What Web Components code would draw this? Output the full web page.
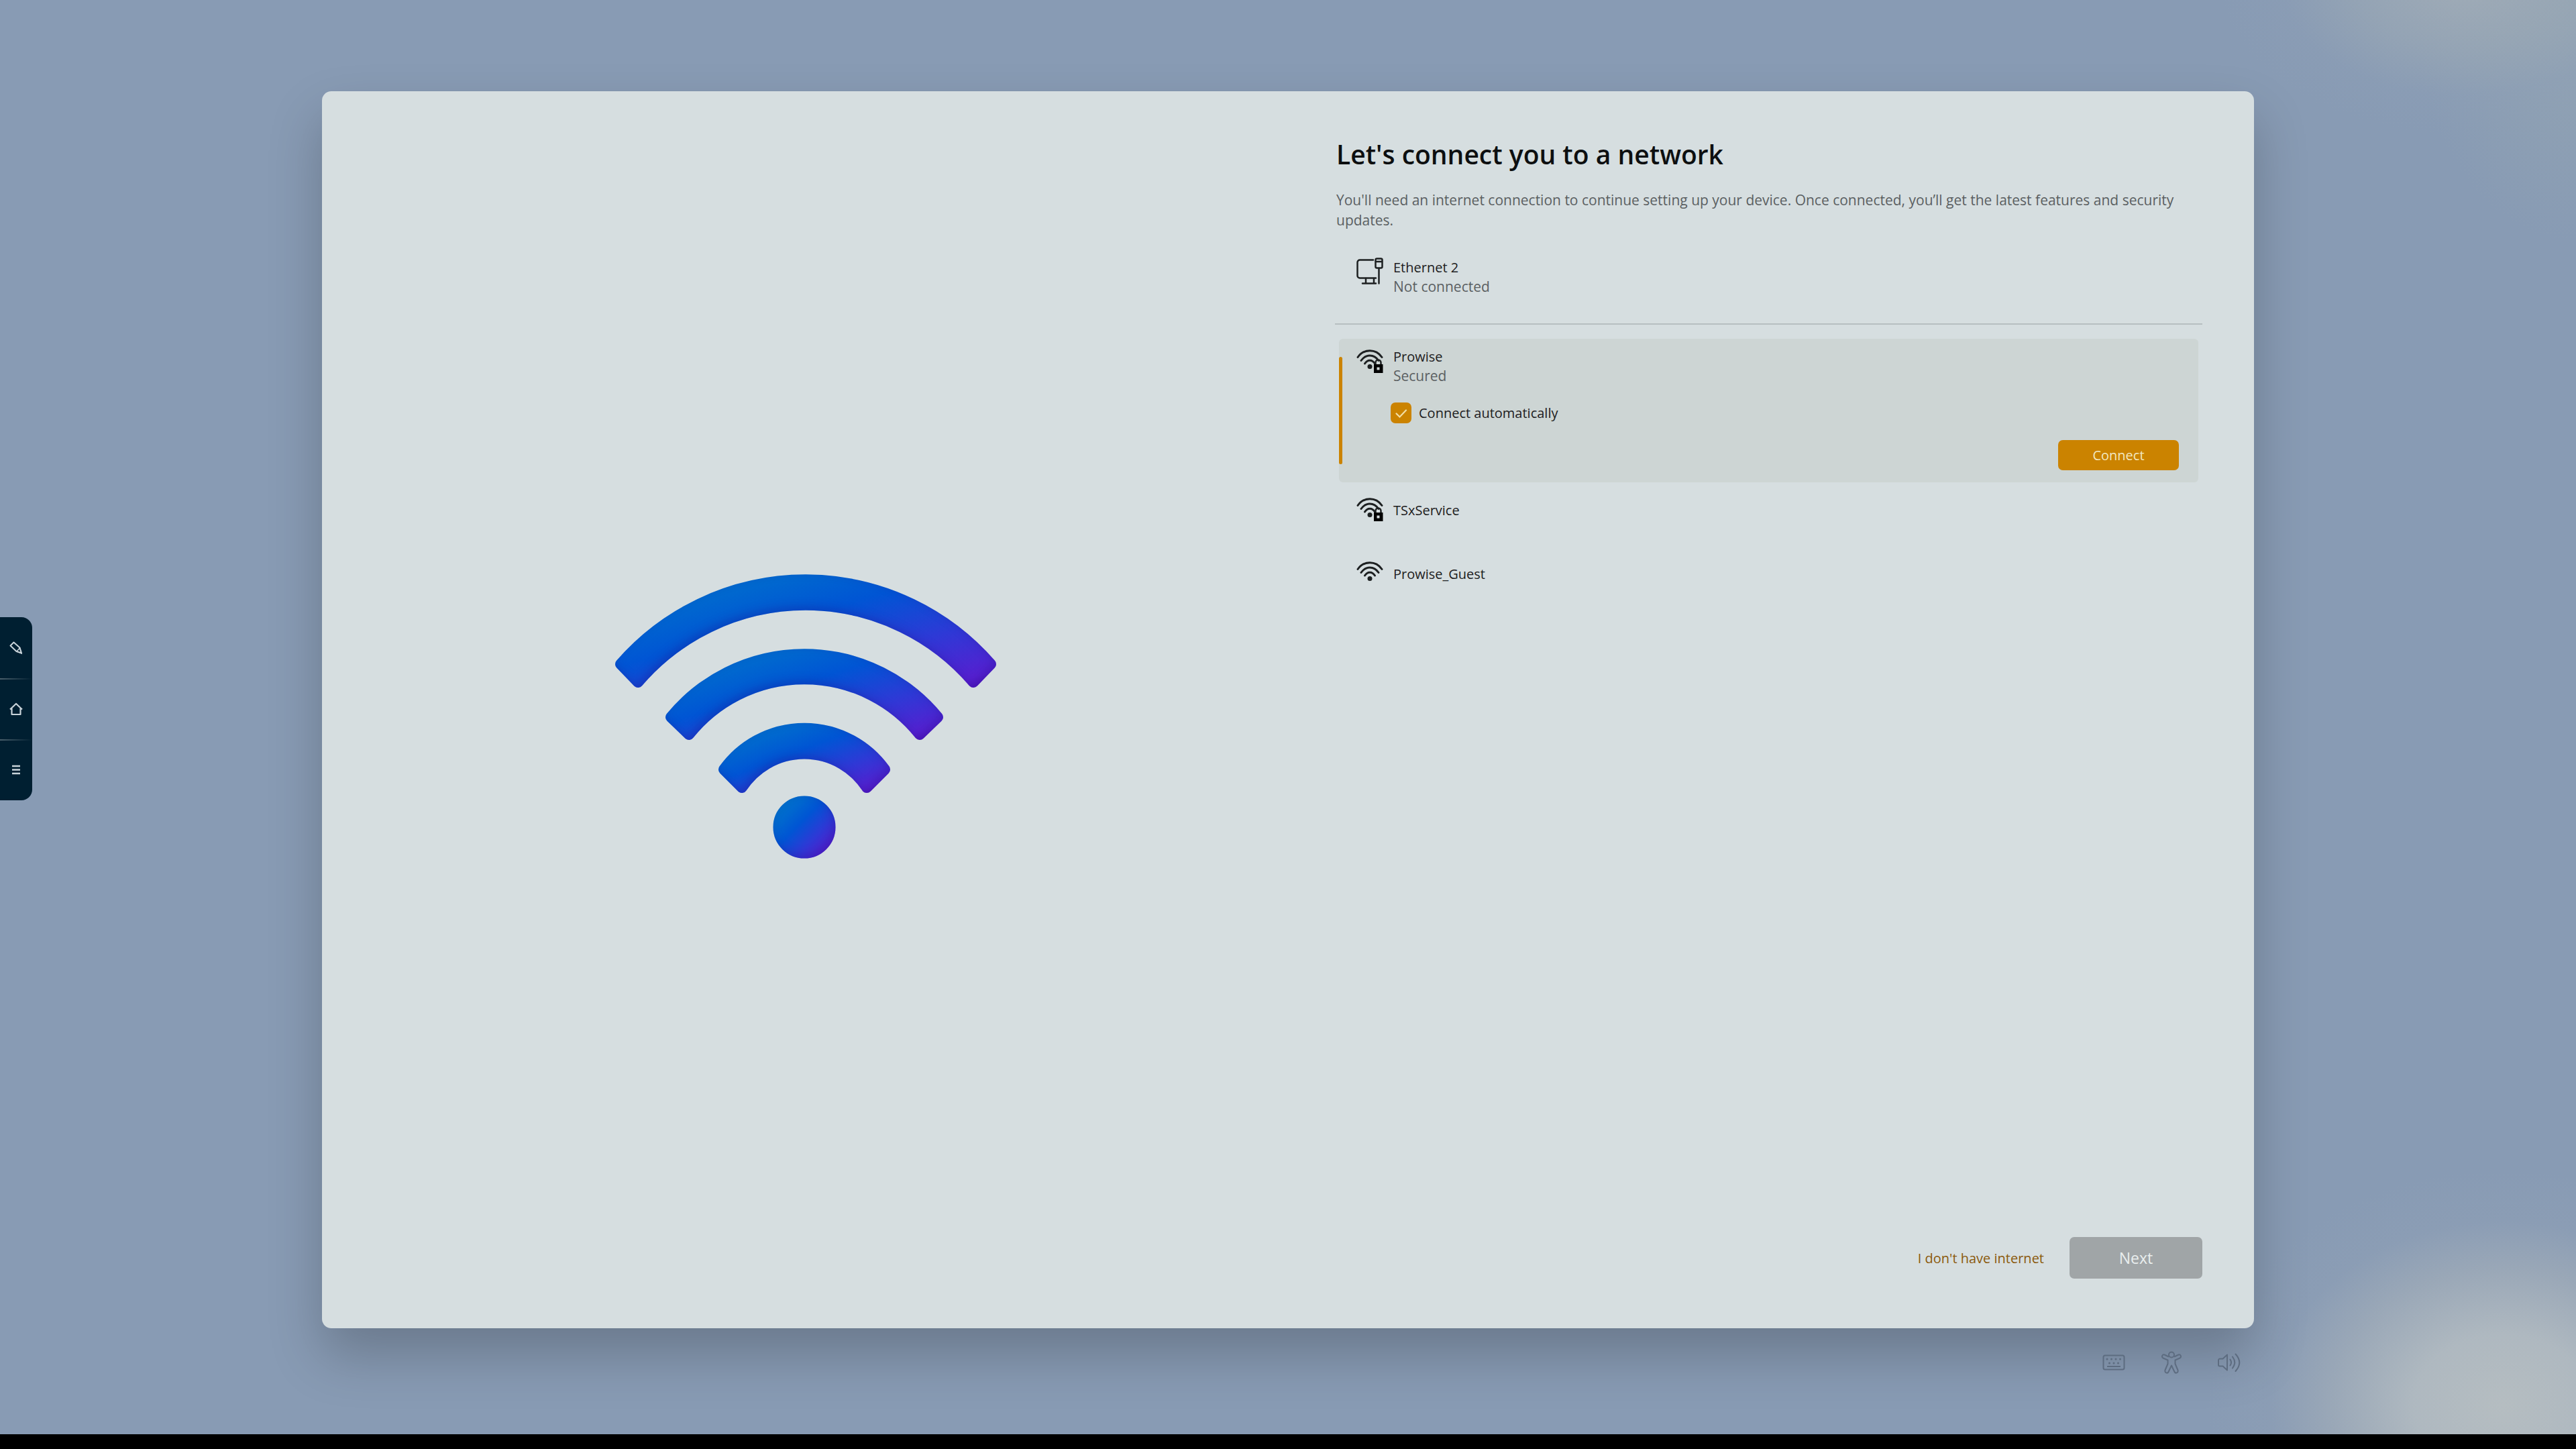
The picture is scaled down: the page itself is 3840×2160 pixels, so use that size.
<!DOCTYPE html>
<html lang="en">
<head>
<meta charset="utf-8">
<title>Network setup</title>
<style>
  :root {
    --colors-card: #d6dee0;
    --colors-selected: #cdd5d4;
    --colors-accent: #cb8300;
    --colors-text: #1d2021;
    --colors-muted: #5b6062;
    --colors-line: #b6bec1;
    --size-label: 20px;
    --size-body: 21px;
    --size-action: 23px;
    --size-title: 39px;
  }

  body {
    margin: 0;
    background: #000;
    color: var(--colors-text);
    font-family: "Open Sans", "Noto Sans", sans-serif;
    font-size: var(--size-label);
  }
</style>
</head>
<body>
<setup-screen>
  <side-dock slot="dock"></side-dock>
  <setup-card>
    <wifi-picture slot="picture"></wifi-picture>
    <span slot="title">Let's connect you to a network</span>
    <span slot="intro">You'll need an internet connection to continue setting up your device. Once connected, you’ll get the latest features and security updates.</span>

    <network-item icon="ethernet" name="Ethernet 2" status="Not connected"></network-item>
    <list-divider></list-divider>
    <network-item icon="wifi-secure" name="Prowise" status="Secured" selected>
      <connect-form></connect-form>
    </network-item>
    <network-item icon="wifi-secure" name="TSxService"></network-item>
    <network-item icon="wifi" name="Prowise_Guest"></network-item>

    <setup-actions slot="actions"></setup-actions>
  </setup-card>
  <system-tray slot="tray"></system-tray>
</setup-screen>

<script>
const wifiArcs = `
  <g fill="none" stroke="currentColor" stroke-width="3" stroke-linecap="round">
    <path d="M2 15.5C11 2.5 29 2.5 38 15.5"/>
    <path d="M7 20.5C14 10.5 26 10.5 33 20.5"/>
    <path d="M12.500 25C16.500 18.500 23.500 18.500 27.500 25"/>
  </g>
  <circle cx="20" cy="29.500" r="3.500" fill="currentColor"/>
`;

const icons = {
  'ethernet': {
    box: '0 0 40 40',
    body: `
      <g fill="none" stroke="currentColor" stroke-width="2.500" stroke-linejoin="round" stroke-linecap="round">
        <path d="M25 3.500H5A3.500 3.500 0 0 0 1.500 7V27A3.500 3.500 0 0 0 5 30.500H29"/>
        <path d="M14 31V38M26 31V38M9 38.500H29"/>
        <rect x="28.500" y="1.500" width="10" height="14" rx="2"/>
        <path d="M29 6H38M33.500 16V38.500"/>
      </g>`,
  },
  'wifi': { box: '0 0 40 40', body: wifiArcs },
  'wifi-secure': {
    box: '0 0 40 40',
    body: `
      ${wifiArcs}
      <path d="M28.500 27V23.500a4 4 0 0 1 8 0V27" fill="none" stroke="currentColor" stroke-width="2.500"/>
      <path fill="#000" fill-rule="evenodd" d="M26 26H39.500V39H26ZM30.500 30.500V34.500H34.500V30.500Z"/>`,
  },
  'keyboard': {
    box: '0 0 34 34',
    body: `
      <rect x="1.500" y="6.500" width="31" height="21" rx="2.500" fill="none" stroke="currentColor" stroke-width="2"/>
      <g fill="currentColor">
        <circle cx="7" cy="12" r="1.500"/><circle cx="13.500" cy="12" r="1.500"/>
        <circle cx="20" cy="12" r="1.500"/><circle cx="26.500" cy="12" r="1.500"/>
        <circle cx="10.500" cy="18" r="1.500"/><circle cx="17" cy="18" r="1.500"/><circle cx="23.500" cy="18" r="1.500"/>
      </g>
      <path d="M7 23H27" stroke="currentColor" stroke-width="2"/>`,
  },
  'accessibility': {
    box: '0 0 34 34',
    body: `
      <g fill="none" stroke="currentColor" stroke-width="2" stroke-linejoin="round">
        <circle cx="17" cy="5.500" r="4"/>
        <path d="M13 8.500L6.500 5.500C3.500 4.500 1.500 8.500 4.500 10.500L11.500 13.500V19L7.500 28.500C6.500 32.500 11 34 12.500 31L17 21.500L21.500 31C23 34 27.500 32.500 26.500 28.500L22.500 19V13.500L29.500 10.500C32.500 8.500 30.500 4.500 27.500 5.500L21 8.500"/>
      </g>`,
  },
  'volume': {
    box: '0 0 34 34',
    body: `
      <g fill="none" stroke="currentColor" stroke-width="2" stroke-linejoin="round" stroke-linecap="round">
        <path d="M14 5.500V28.500L7.500 22.500H3A2 2 0 0 1 1 20.500V13.500A2 2 0 0 1 3 11.500H7.500Z"/>
        <path d="M18.500 12.500Q21.500 17 18.500 21.500M22 8.500Q28.500 17 22 25.500M26.500 4.500Q38 17 26.500 30"/>
      </g>`,
  },
  'pen': {
    box: '0 0 20 20',
    body: `
      <path d="M1.500 6.500L6.500 1.500L15.500 9.500L18 17.500L10.500 15Z" fill="none" stroke="currentColor" stroke-width="2" stroke-linejoin="round"/>
      <path d="M11 15L15.500 10L18 18Z" fill="none" stroke="currentColor" stroke-width="1.500"/>`,
  },
  'home': {
    box: '0 0 20 20',
    body: '<path d="M1 10.500L10 2L19 10.500M3.500 9V18H16.500V9" fill="none" stroke="currentColor" stroke-width="2.200" stroke-linejoin="round"/>',
  },
  'menu': {
    box: '0 0 20 20',
    body: '<path d="M4 4H16M4 9.500H16M4 15H16" fill="none" stroke="currentColor" stroke-width="2.500"/>',
  },
};

class GlyphIcon extends HTMLElement {
  constructor() {
    super();
    this.attachShadow({ mode: 'open' });
  }

  connectedCallback() {
    const icon = icons[this.getAttribute('name')];

    this.shadowRoot.innerHTML = `
      <style>
        :host {
          display: block;
          flex: none;
          width: 40px;
          height: 40px;
        }

        svg {
          display: block;
          width: 100%;
          height: 100%;
        }
      </style>
      <svg viewBox="${icon.box}" aria-hidden="true">${icon.body}</svg>
    `;
  }
}

// Base for the elements whose markup never changes
class StaticElement extends HTMLElement {
  constructor() {
    super();
    this.attachShadow({ mode: 'open' }).innerHTML = this.constructor.markup;
  }
}

class SetupScreen extends StaticElement {
  static markup = `
    <style>
      :host {
        display: grid;
        grid-template-rows: 136px 1fr 158px;
        grid-template-columns: 12.5% 1fr 12.5%;
        box-sizing: border-box;
        height: 100vh;
        border-bottom: 22px solid #000;
        overflow: hidden;
        background:
          radial-gradient(ellipse 440px 350px at calc(100% - 110px) calc(100% - 44px), #b5bdc1 0%, rgba(178, 187, 193, 0.92) 30%, rgba(163, 174, 185, 0.65) 58%, rgba(145, 161, 182, 0.35) 78%, rgba(136, 155, 180, 0) 100%),
          radial-gradient(ellipse 360px 230px at calc(100% - 170px) -30px, rgba(162, 173, 183, 0.9) 0%, rgba(154, 168, 181, 0.65) 45%, rgba(142, 159, 182, 0.3) 75%, rgba(136, 155, 180, 0) 100%),
          radial-gradient(ellipse 240px 340px at 100% 20px, rgba(150, 167, 179, 0.75) 0%, rgba(136, 155, 180, 0) 100%),
          #889bb4;
      }

      ::slotted(setup-card) {
        grid-area: 2 / 2;
      }

      ::slotted(system-tray) {
        grid-area: 3 / 2;
      }
    </style>
    <slot name="dock"></slot>
    <slot></slot>
    <slot name="tray"></slot>
  `;
}

class SideDock extends StaticElement {
  static markup = `
    <style>
      /* floats over the left edge of the desktop */
      :host {
        position: fixed;
        left: 0;
        top: calc(50vh - 160px);
        width: 48px;
        border-radius: 0 16px 16px 0;
        background: #001f31;
        color: #c9d3d9;
      }

      nav {
        display: grid;
        grid-template-rows: repeat(3, 91px);
      }

      button {
        display: grid;
        place-items: center;
        padding: 0;
        border: 0;
        background: none;
        color: inherit;
      }

      button + button {
        background: linear-gradient(90deg, #4b606c, #001f31) top / 100% 2px no-repeat;
      }

      glyph-icon {
        width: 20px;
        height: 20px;
      }
    </style>
    <nav>
      <button type="button" aria-label="Pen"><glyph-icon name="pen"></glyph-icon></button>
      <button type="button" aria-label="Home"><glyph-icon name="home"></glyph-icon></button>
      <button type="button" aria-label="Menu"><glyph-icon name="menu"></glyph-icon></button>
    </nav>
  `;
}

class SetupCard extends StaticElement {
  static markup = `
    <style>
      :host {
        display: grid;
        grid-template-columns: 1fr 1fr;
        border-radius: 14px;
        background: var(--colors-card);
        box-shadow: 0 40px 80px rgba(0, 0, 0, 0.22);
      }

      .picture {
        display: grid;
        place-items: center;
        padding: 20px 0 0 2px;
      }

      .content {
        display: flex;
        flex-direction: column;
        padding: 68px 77px 74px 70px;
      }

      h1 {
        margin: 0 2px;
        color: #0d0f10;
        font-size: var(--size-title);
        font-weight: 600;
        line-height: 52px;
      }

      p {
        margin: 27px 2px 29px;
        color: var(--colors-muted);
        font-size: var(--size-body);
        line-height: 30px;
      }

      .list {
        flex: 1;
      }
    </style>
    <div class="picture"><slot name="picture"></slot></div>
    <div class="content">
      <h1><slot name="title"></slot></h1>
      <p><slot name="intro"></slot></p>
      <div class="list"><slot></slot></div>
      <slot name="actions"></slot>
    </div>
  `;
}

class WifiPicture extends StaticElement {
  static markup = `
    <style>
      :host {
        display: block;
        width: 570px;
      }

      svg {
        display: block;
        width: 100%;
      }
    </style>
    <svg viewBox="0 0 570 424" aria-hidden="true">
      <defs>
        <linearGradient id="fade" x1="0" y1="0" x2="1" y2="1">
          <stop offset="0" stop-color="#0073c8"/>
          <stop offset="0.22" stop-color="#0067cf"/>
          <stop offset="0.42" stop-color="#0055d4"/>
          <stop offset="0.7" stop-color="#2e39d6"/>
          <stop offset="0.95" stop-color="#5520d0"/>
          <stop offset="1" stop-color="#5518c4"/>
        </linearGradient>
        <filter id="shade" x="-5%" y="-5%" width="110%" height="110%" color-interpolation-filters="sRGB">
          <feOffset in="SourceAlpha" dx="-4" dy="-5" result="moved"/>
          <feGaussianBlur in="moved" stdDeviation="7" result="soft"/>
          <feFlood flood-color="#1c0a86" flood-opacity="0.28"/>
          <feComposite in2="soft" operator="out"/>
          <feComposite in2="SourceAlpha" operator="in" result="edge"/>
          <feMerge>
            <feMergeNode in="SourceGraphic"/>
            <feMergeNode in="edge"/>
          </feMerge>
        </filter>
      </defs>
      <g fill="url(#fade)" stroke="url(#fade)" stroke-width="16" stroke-linejoin="round" filter="url(#shade)">
        <path d="M9 134A366 366 0 0 1 561 134L535 161A329 329 0 0 0 35 161Z"/>
        <path d="M84 213A258 258 0 0 1 482 213L455 239A220 220 0 0 0 111 239Z"/>
        <path d="M163 291A148 148 0 0 1 403 291L376 318A111 111 0 0 0 190 318Z"/>
        <circle cx="283" cy="377" r="38.500"/>
      </g>
    </svg>
  `;
}

class NetworkItem extends HTMLElement {
  constructor() {
    super();
    this.attachShadow({ mode: 'open' });
  }

  connectedCallback() {
    const status = this.getAttribute('status');

    this.shadowRoot.innerHTML = `
      <style>
        :host {
          display: block;
          position: relative;
          margin: 0 6px;
          padding: 12px 29px 39px 26px;
          border-radius: 6px;
        }

        :host([selected]) {
          margin-bottom: 7px;
          padding-bottom: 18px;
          background: var(--colors-selected);
        }

        /* accent bar on the edge of the open network */
        :host([selected])::before {
          content: "";
          position: absolute;
          left: 0;
          top: 27px;
          bottom: 27px;
          width: 5px;
          border-radius: 3px;
          background: var(--colors-accent);
        }

        .row {
          display: flex;
          gap: 15px;
        }

        .text {
          display: flex;
          flex-direction: column;
          justify-content: center;
          min-height: 44px;
          line-height: 29px;
        }

        .status {
          color: var(--colors-muted);
          font-size: var(--size-body);
        }
      </style>
      <div class="row">
        <glyph-icon name="${this.getAttribute('icon')}"></glyph-icon>
        <div class="text">
          <span>${this.getAttribute('name')}</span>
          ${status ? `<span class="status">${status}</span>` : ''}
        </div>
      </div>
      <slot></slot>
    `;
  }
}

class ListDivider extends StaticElement {
  static markup = `
    <style>
      :host {
        display: block;
        height: 2px;
        margin: 1px 0 21px;
        background: var(--colors-line);
      }
    </style>
  `;
}

class ConnectForm extends StaticElement {
  static markup = `
    <style>
      :host {
        display: flex;
        flex-direction: column;
        gap: 25px;
        padding: 25px 0 0 51px;
      }

      .check {
        display: flex;
        align-items: center;
        gap: 11px;
      }

      .box {
        display: grid;
        width: 31px;
        height: 31px;
      }

      .box > * {
        grid-area: 1 / 1;
      }

      input {
        appearance: none;
        margin: 0;
        border: 2px solid var(--colors-muted);
        border-radius: 7px;
      }

      input:checked {
        border-color: var(--colors-accent);
        background: var(--colors-accent);
      }

      .tick {
        visibility: hidden;
        pointer-events: none;
      }

      input:checked + .tick {
        visibility: visible;
      }

      label {
        line-height: 30px;
      }

      button {
        align-self: flex-end;
        width: 180px;
        height: 45px;
        padding: 0;
        border: 0;
        border-radius: 7px;
        background: var(--colors-accent);
        color: #f2e7c0;
        font: inherit;
      }
    </style>
    <div class="check">
      <span class="box">
        <input type="checkbox" id="auto" checked>
        <svg class="tick" viewBox="0 0 31 31" aria-hidden="true">
          <path d="M8.500 16.500L13.500 21.500L23 11.500" fill="none" stroke="#f2dfa6" stroke-width="2.200" stroke-linecap="round"/>
        </svg>
      </span>
      <label for="auto">Connect automatically</label>
    </div>
    <button type="button">Connect</button>
  `;
}

class SetupActions extends StaticElement {
  static markup = `
    <style>
      :host {
        display: flex;
        align-items: center;
        justify-content: flex-end;
        gap: 38px;
      }

      a {
        color: #8b5a0d;
        text-decoration: none;
      }

      button {
        width: 198px;
        height: 62px;
        padding: 0;
        border: 0;
        border-radius: 7px;
        background: #a0a5a7;
        color: #e9eeee;
        font: inherit;
        font-size: var(--size-action);
      }
    </style>
    <a href="#offline">I don't have internet</a>
    <button type="button" disabled>Next</button>
  `;
}

class SystemTray extends StaticElement {
  static markup = `
    <style>
      :host {
        display: flex;
        justify-content: flex-end;
        gap: 52px;
        padding: 34px 20px 0 0;
        color: #5d6c80;
      }

      button {
        padding: 0;
        border: 0;
        height: 34px;
        background: none;
        color: inherit;
      }

      glyph-icon {
        width: 34px;
        height: 34px;
      }
    </style>
    <button type="button" aria-label="Keyboard"><glyph-icon name="keyboard"></glyph-icon></button>
    <button type="button" aria-label="Accessibility"><glyph-icon name="accessibility"></glyph-icon></button>
    <button type="button" aria-label="Volume"><glyph-icon name="volume"></glyph-icon></button>
  `;
}

window.customElements.define('glyph-icon', GlyphIcon);
window.customElements.define('setup-screen', SetupScreen);
window.customElements.define('side-dock', SideDock);
window.customElements.define('setup-card', SetupCard);
window.customElements.define('wifi-picture', WifiPicture);
window.customElements.define('network-item', NetworkItem);
window.customElements.define('list-divider', ListDivider);
window.customElements.define('connect-form', ConnectForm);
window.customElements.define('setup-actions', SetupActions);
window.customElements.define('system-tray', SystemTray);
</script>
</body>
</html>
